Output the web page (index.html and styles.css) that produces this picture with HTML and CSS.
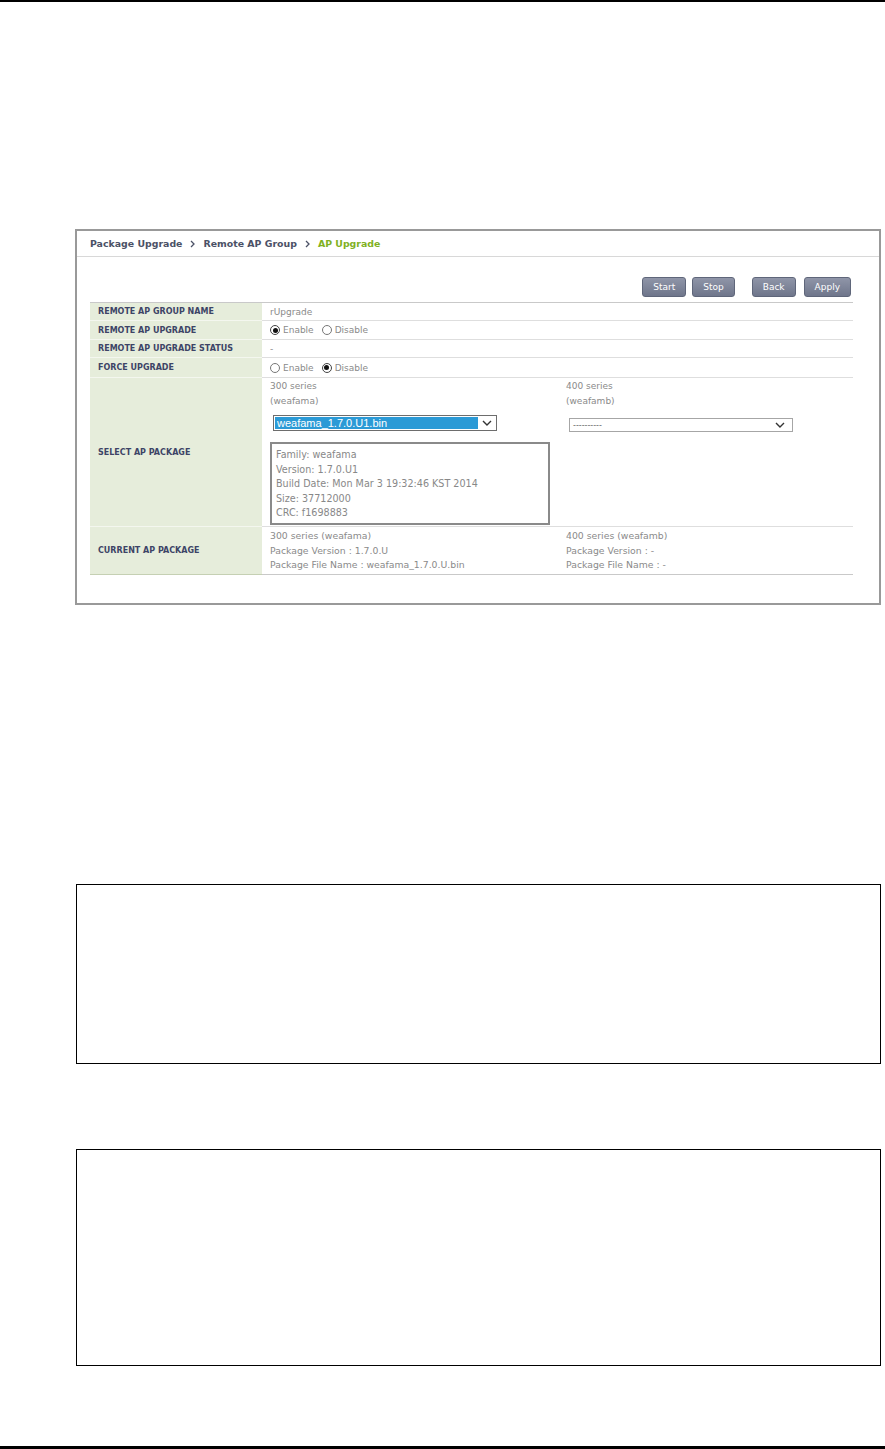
FILE: index.html
```html
<!DOCTYPE html>
<html lang="en">

<head>
    <meta charset="UTF-8">
    <meta name="viewport" content="width=device-width, initial-scale=1.0">
    <title>AP Upgrade</title>
    <link rel="stylesheet" href="styles.css">
</head>

<body>
    <div class="rule rule-top"></div>

    <div class="shot">
        <div class="crumb">
            <span>Package Upgrade</span>
            <svg class="crumb-sep" width="5" height="8" viewBox="0 0 5 8"><polyline points="1,1 4,4 1,7" fill="none" stroke="#4b5166" stroke-width="1.3"/></svg>
            <span>Remote AP Group</span>
            <svg class="crumb-sep" width="5" height="8" viewBox="0 0 5 8"><polyline points="1,1 4,4 1,7" fill="none" stroke="#4b5166" stroke-width="1.3"/></svg>
            <span class="crumb-current">AP Upgrade</span>
        </div>

        <div class="shot-body">
            <div class="actions">
                <button class="btn">Start</button>
                <button class="btn">Stop</button>
                <button class="btn btn-split">Back</button>
                <button class="btn">Apply</button>
            </div>

            <div class="form">
                <div class="row">
                    <div class="label">REMOTE AP GROUP NAME</div>
                    <div class="value h17">rUpgrade</div>
                </div>
                <div class="row">
                    <div class="label">REMOTE AP UPGRADE</div>
                    <div class="value h18">
                        <span class="radio checked"></span><span class="radio-text">Enable</span>
                        <span class="radio"></span><span class="radio-text">Disable</span>
                    </div>
                </div>
                <div class="row">
                    <div class="label">REMOTE AP UPGRADE STATUS</div>
                    <div class="value h17">-</div>
                </div>
                <div class="row">
                    <div class="label">FORCE UPGRADE</div>
                    <div class="value h19">
                        <span class="radio"></span><span class="radio-text">Enable</span>
                        <span class="radio checked"></span><span class="radio-text">Disable</span>
                    </div>
                </div>
                <div class="row">
                    <div class="label">SELECT AP PACKAGE</div>
                    <div class="value package">
                        <div class="series">
                            <div class="line">300 series</div>
                            <div class="line">(weafama)</div>
                            <div class="select select-active">
                                <span class="select-text">weafama_1.7.0.U1.bin</span>
                                <svg class="select-arrow" width="10" height="6" viewBox="0 0 10 6"><polyline points="1,1 5,5 9,1" fill="none" stroke="#333" stroke-width="1.4"/></svg>
                            </div>
                            <div class="info">
                                <div>Family: weafama</div>
                                <div>Version: 1.7.0.U1</div>
                                <div>Build Date: Mon Mar 3 19:32:46 KST 2014</div>
                                <div>Size: 37712000</div>
                                <div>CRC: f1698883</div>
                            </div>
                        </div>
                        <div class="series">
                            <div class="line">400 series</div>
                            <div class="line">(weafamb)</div>
                            <div class="select select-empty">
                                <span class="select-text">----------</span>
                                <svg class="select-arrow" width="10" height="6" viewBox="0 0 10 6"><polyline points="1,1 5,5 9,1" fill="none" stroke="#333" stroke-width="1.4"/></svg>
                            </div>
                        </div>
                    </div>
                </div>
                <div class="row row-last">
                    <div class="label">CURRENT AP PACKAGE</div>
                    <div class="value package current">
                        <div class="series">
                            <div>300 series (weafama)</div>
                            <div>Package Version : 1.7.0.U</div>
                            <div>Package File Name : weafama_1.7.0.U.bin</div>
                        </div>
                        <div class="series">
                            <div>400 series (weafamb)</div>
                            <div>Package Version : -</div>
                            <div>Package File Name : -</div>
                        </div>
                    </div>
                </div>
            </div>
        </div>
    </div>

    <div class="frame frame-one"></div>
    <div class="frame frame-two"></div>

    <div class="rule rule-bottom"></div>
</body>

</html>
```

FILE: styles.css
```css
* {
    box-sizing: border-box;
}

body {
    margin: 0;
    padding: 0;
    background-color: #fff;
    font-family: 'DejaVu Sans', Verdana, sans-serif;
}

.rule {
    background-color: #000;
}

.rule-top {
    height: 2px;
}

.rule-bottom {
    height: 3px;
    margin-top: 80px;
}

/* screenshot frame */
.shot {
    margin: 227px 4px 0 75px;
    height: 376px;
    border: 2px solid #999;
    background-color: #fff;
}

.crumb {
    height: 26px;
    padding-left: 13px;
    border-bottom: 1px solid #d8d8d8;
    display: flex;
    align-items: center;
    gap: 8px;
    font-size: 9.4px;
    font-weight: bold;
    color: #4b5166;
}

.crumb-current {
    color: #7fb11f;
}

.shot-body {
    padding: 20px 26px 0 13px;
}

.actions {
    display: flex;
    justify-content: flex-end;
    padding-right: 2px;
    margin-bottom: 5px;
}

.btn {
    height: 20px;
    padding: 0 10px;
    margin-left: 6px;
    font-family: 'DejaVu Sans', Verdana, sans-serif;
    font-size: 9px;
    color: #fff;
    background: linear-gradient(#8f95a8, #6f768b);
    border: 1px solid #5f667a;
    border-radius: 3px;
}

.btn-split {
    margin-left: 17px;
}

.btn:last-child {
    margin-left: 8px;
}

/* form table */
.form {
    border-top: 1px solid #c9c9c9;
}

.row {
    display: grid;
    grid-template-columns: 172px 1fr;
}

.label {
    display: flex;
    align-items: center;
    padding-left: 8px;
    background-color: #e6eddb;
    border-bottom: 1px solid #f4f7ef;
    font-size: 8px;
    font-weight: bold;
    color: #3d4466;
}

.value {
    display: flex;
    align-items: center;
    padding-left: 8px;
    border-bottom: 1px solid #dedede;
    font-size: 9px;
    color: #8a8a8a;
}

.h17 {
    min-height: 18px;
}

.h18 {
    min-height: 19px;
}

.h19 {
    min-height: 20px;
}

.row-last .label {
    border-bottom-color: #c5d0b3;
}

.row-last .value {
    border-bottom-color: #c9c9c9;
}

.radio {
    width: 10px;
    height: 10px;
    border: 1px solid #777;
    border-radius: 50%;
    background-color: #fff;
    display: flex;
    align-items: center;
    justify-content: center;
}

.radio.checked {
    border-color: #444;
}

.radio.checked::after {
    content: '';
    width: 5px;
    height: 5px;
    border-radius: 50%;
    background-color: #111;
}

.radio-text {
    margin: 0 8px 0 3px;
}

/* package cells */
.package {
    display: grid;
    grid-template-columns: 296px 1fr;
    align-items: start;
    padding-top: 1px;
    padding-bottom: 1px;
}

.line {
    height: 15px;
    line-height: 15px;
}

.select {
    display: flex;
    align-items: center;
    width: 224px;
    margin-left: 3px;
    background-color: #fff;
}

.select-active {
    height: 16px;
    margin-top: 6px;
    padding: 1px;
    border: 1px solid #6d6d6d;
}

.select-active .select-text {
    flex: 1;
    height: 100%;
    padding-left: 2px;
    background-color: #2b9ad6;
    color: #fff;
    font-family: 'Liberation Sans', Arial, sans-serif;
    font-size: 11px;
    line-height: 12px;
}

.select-empty {
    height: 14px;
    margin-top: 9px;
    padding: 0 4px 0 3px;
    border: 1px solid #a6a6a6;
}

.select-empty .select-text {
    flex: 1;
    font-size: 8px;
    color: #666;
}

.select-arrow {
    margin: 0 3px 0 4px;
}

.info {
    width: 280px;
    height: 83px;
    margin-top: 11px;
    padding: 4px 4px 2px 4px;
    border: 2px solid #8a8a8a;
    font-size: 9.6px;
    line-height: 14.6px;
    color: #888;
}

.current {
    padding-top: 2px;
    font-size: 9.3px;
    line-height: 14.5px;
}

/* empty frames */
.frame {
    width: 805px;
    margin-left: 76px;
    border: 1px solid #000;
}

.frame-one {
    height: 180px;
    margin-top: 279px;
}

.frame-two {
    height: 217px;
    margin-top: 85px;
}
```
